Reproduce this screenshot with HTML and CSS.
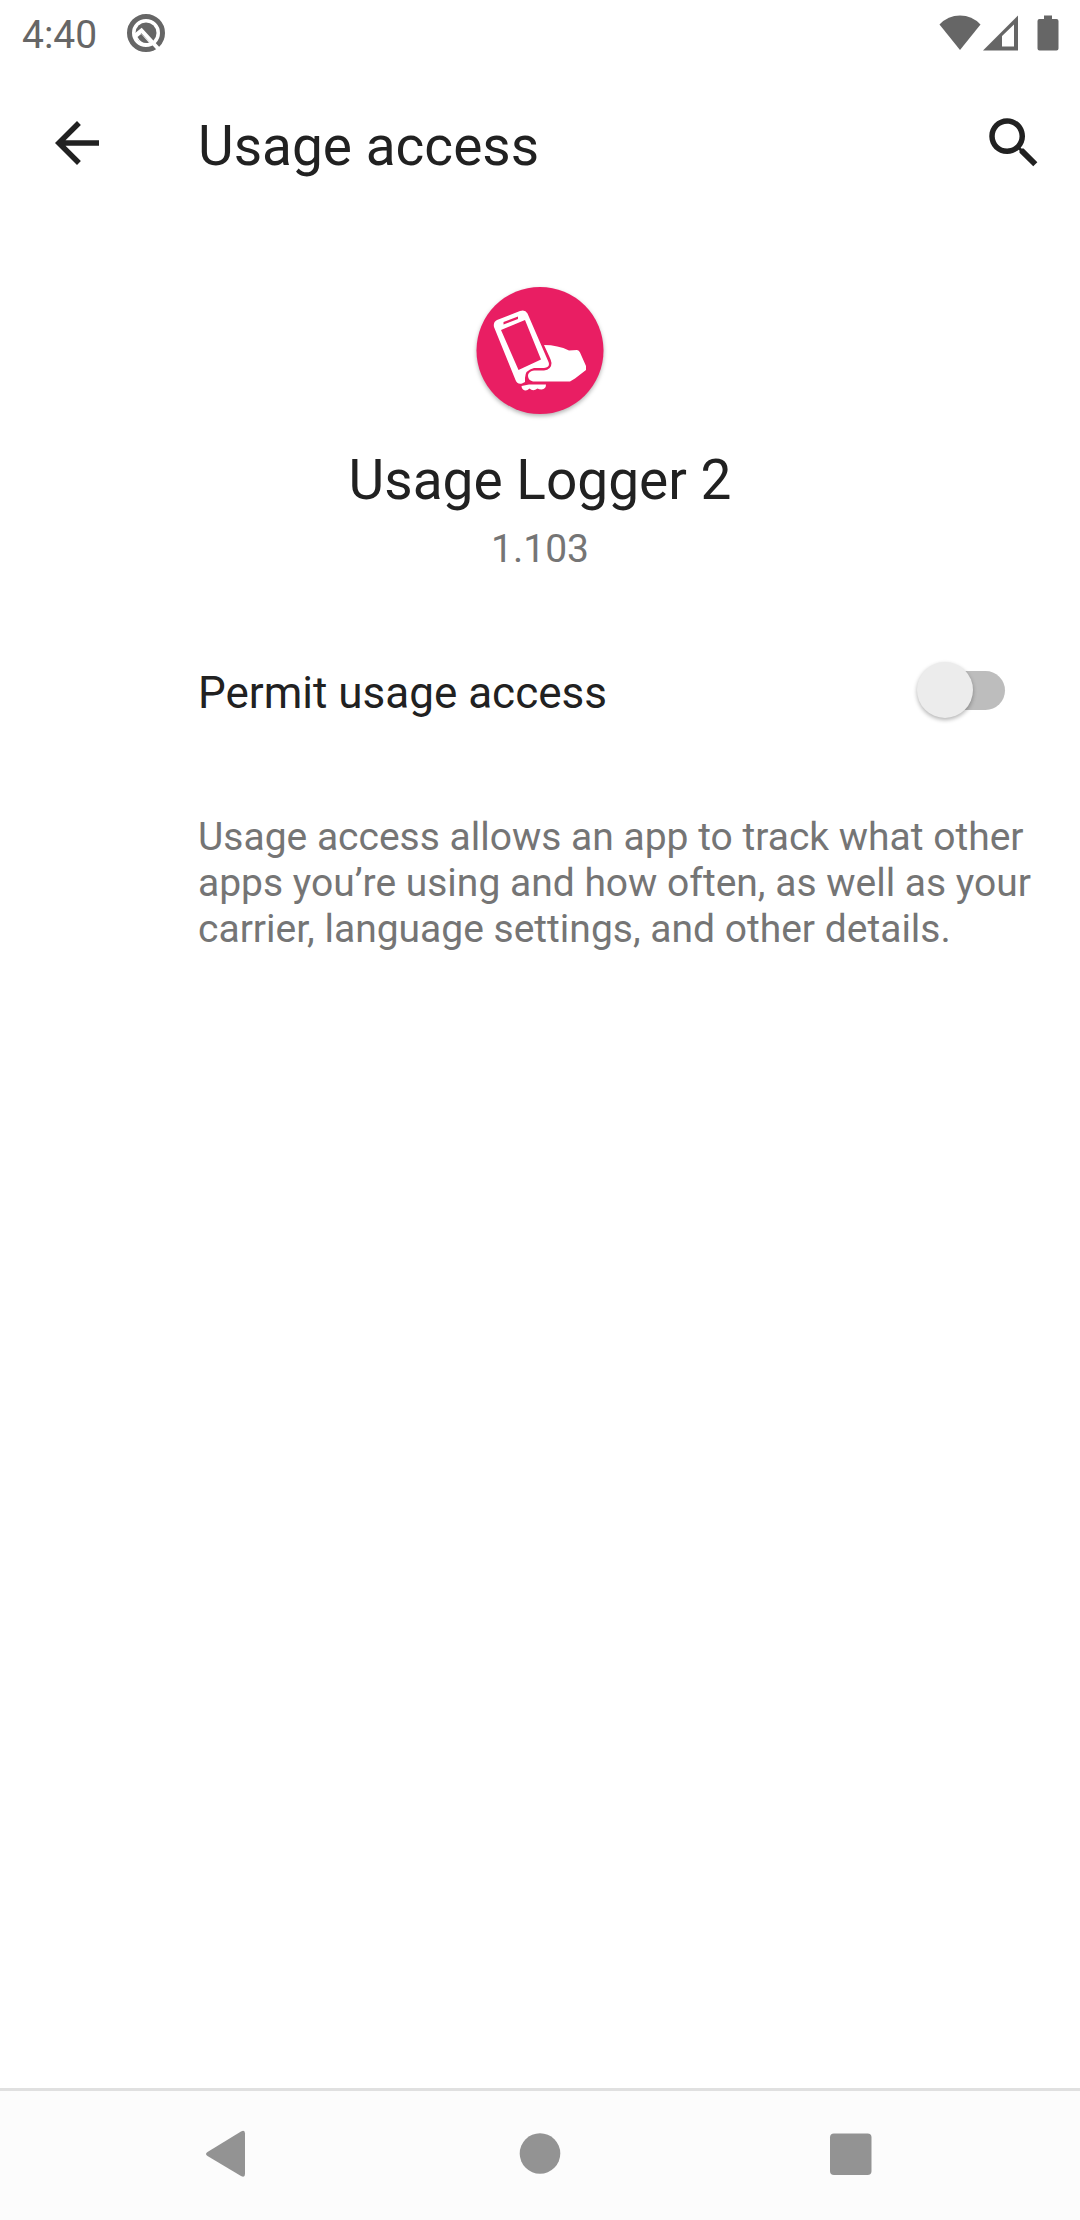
FILE: index.html
```html
<!DOCTYPE html>
<html lang="en">
<head>
<meta charset="utf-8">
<meta name="viewport" content="width=device-width, initial-scale=1">
<title>Usage access</title>
<link rel="stylesheet" href="styles.css">
</head>
<body>
<div class="status-bar">
  <span class="clock">4:40</span>
  <svg class="notice-icon" viewBox="0 0 40 40" aria-hidden="true">
    <circle cx="20" cy="20" r="16.500" fill="none" stroke="#666" stroke-width="5"/>
    <circle cx="20" cy="20" r="10.500" fill="#666"/>
    <path d="M8.500 23L15.500 17.500L32.500 36" fill="none" stroke="#fff" stroke-width="4"/>
    <path d="M9 24L14.500 20L26 31.500L17 32Z" fill="#fff"/>
    <path d="M11.500 24L15.200 21L23 29.800Q15.500 31.500 11.500 24Z" fill="#666"/>
  </svg>
  <div class="status-icons">
    <svg class="wifi" viewBox="0 0 42 36" aria-hidden="true"><path d="M0.500 9.500Q9 0.500 21 0.500T41.500 9.500L21 35Z" fill="#666"/></svg>
    <svg class="signal" viewBox="0 0 36 36" aria-hidden="true"><path fill-rule="evenodd" d="M0 35.500L35 0.500V35.500ZM19 21V31.500H31V9.500Z" fill="#666"/></svg>
    <svg class="battery" viewBox="0 0 22 36" aria-hidden="true"><path d="M7 0.500H15V4H19.500Q21.500 4 21.500 6V33.500Q21.500 35.500 19.500 35.500H2.500Q0.500 35.500 0.500 33.500V6Q0.500 4 2.500 4H7Z" fill="#666"/></svg>
  </div>
</div>

<header class="app-bar">
  <button class="icon-button" type="button" aria-label="Navigate up">
    <svg viewBox="0 0 24 24" aria-hidden="true"><path d="M20 11H7.830l5.590-5.590L12 4l-8 8 8 8 1.410-1.410L7.830 13H20v-2z"/></svg>
  </button>
  <h1 class="title">Usage access</h1>
  <button class="icon-button" type="button" aria-label="Search">
    <svg viewBox="0 0 24 24" aria-hidden="true"><path d="M15.500 14h-.79l-.28-.27C15.410 12.590 16 11.110 16 9.500 16 5.910 13.090 3 9.500 3S3 5.910 3 9.500 5.910 16 9.500 16c1.610 0 3.090-.59 4.230-1.570l.27.28v.79l5 4.990L20.490 19l-4.990-5zm-6 0C7.010 14 5 11.990 5 9.500S7.010 5 9.500 5 14 7.010 14 9.500 11.990 14 9.500 14z"/></svg>
  </button>
</header>

<main>
  <section class="app-header">
    <svg class="app-icon" viewBox="0 0 160 160" aria-hidden="true">
      <circle cx="80" cy="80.500" r="63.500" fill="#e91e63"/>
      <g fill="#fff">
        <path fill-rule="evenodd" d="M37 50L60 41Q65 39 67.500 43.500L88.500 92Q90.500 97 84 98H74Q65 100 65 108V112L62 113.500Q57 114.500 55.500 110L34 57Q33 52 37 50ZM41 60L58.500 100L81 89.500L65 50ZM43.500 52V54.500L58 49V46.500Z"/>
        <path d="M84 75Q98 75 109 80.500L117 80Q119 80 120 82.500L126 96V100L115 108.500L110 111.500H73Q67.500 110 68 105Q69 101 74 100.500H84Q91.500 99.500 91.500 93Q91 90 89.500 87Z"/>
        <path d="M61.500 116L69 114.500H86Q86 119 81.500 119.500Q79 119.500 77.500 118.500Q73 122 69.500 118.500Q66 122 63 119.500Q61.500 118 61.500 116Z"/>
      </g>
    </svg>
    <h2 class="title">Usage Logger 2</h2>
    <p class="version">1.103</p>
  </section>

  <div class="preference">
    <label for="permit">Permit usage access</label>
    <input class="switch" id="permit" type="checkbox" role="switch">
  </div>

  <p class="description">Usage access allows an app to track what other apps you’re using and how often, as well as your carrier, language settings, and other details.</p>
</main>

<nav class="nav-bar">
  <button type="button" aria-label="Back"><svg viewBox="0 0 66 66" aria-hidden="true"><path d="M11.500 31L45 10.500Q49 8.500 49 12.500V53Q49 57 45 55L11.500 35Q8.500 33 11.500 31Z"/></svg></button>
  <button type="button" aria-label="Home"><svg viewBox="0 0 66 66" aria-hidden="true"><circle cx="33" cy="32.500" r="20.300"/></svg></button>
  <button type="button" aria-label="Overview"><svg viewBox="0 0 66 66" aria-hidden="true"><rect x="12" y="12.500" width="41.500" height="41.500" rx="4"/></svg></button>
</nav>
</body>
</html>
```
FILE: styles.css
```css
* {
  box-sizing: border-box;
}

body {
  margin: 0;
  min-height: 100vh;
  display: flex;
  flex-direction: column;
  background: #fff;
  color: #212121;
  font-family: Roboto, "Liberation Sans", sans-serif;
}

h1, h2, p {
  margin: 0;
  font-weight: 400;
}

button {
  display: flex;
  align-items: center;
  justify-content: center;
  padding: 0;
  border: 0;
  background: none;
}

.status-bar {
  display: flex;
  align-items: center;
  height: 66px;
  padding: 0 21px 0 22px;
  color: #666;
}

.clock {
  padding-top: 4px;
  font-size: 39px;
  line-height: 46px;
}

.notice-icon {
  width: 40px;
  height: 40px;
  margin-left: 29px;
}

.status-icons {
  display: flex;
  margin-left: auto;
}

.wifi {
  width: 42px;
  height: 36px;
}

.signal {
  width: 36px;
  height: 36px;
  margin-left: 2px;
}

.battery {
  width: 22px;
  height: 36px;
  margin-left: 18px;
}

.app-bar {
  display: flex;
  align-items: center;
  height: 154px;
  padding: 0 33px 0 44px;
}

.icon-button {
  width: 66px;
  height: 66px;
}

.icon-button svg {
  width: 66px;
  height: 66px;
  fill: #212121;
}

.title {
  font-size: 55px;
  line-height: 64px;
}

.app-bar .title {
  flex: 1;
  padding: 6px 0 0 88px;
}

main {
  flex: 1;
}

.app-header {
  display: flex;
  flex-direction: column;
  align-items: center;
  padding-top: 50px;
}

.app-icon {
  width: 160px;
  height: 160px;
  margin-bottom: 18px;
  filter: drop-shadow(0 2px 2px rgba(0, 0, 0, 0.3));
}

.version {
  margin-top: 14px;
  font-size: 39px;
  line-height: 46px;
  color: #757575;
}

.preference {
  display: flex;
  align-items: center;
  justify-content: space-between;
  height: 154px;
  margin-top: 41px;
  padding: 0 75px 0 198px;
  font-size: 44px;
  line-height: 52px;
}

.preference label {
  padding-top: 6px;
}

.switch {
  appearance: none;
  display: flex;
  align-items: center;
  width: 88px;
  height: 56px;
  margin: 0;
}

.switch::before {
  content: "";
  flex: none;
  width: 56px;
  height: 56px;
  border-radius: 50%;
  background: #ececec;
  box-shadow: 0 2px 4px rgba(0, 0, 0, 0.3);
  z-index: 1;
}

.switch::after {
  content: "";
  flex: none;
  width: 78px;
  height: 39px;
  margin-left: -46px;
  border-radius: 20px;
  background: #bdbdbd;
}

.switch:checked {
  flex-direction: row-reverse;
}

.description {
  padding: 47px 33px 0 198px;
  font-size: 39px;
  line-height: 46px;
  color: #757575;
}

.nav-bar {
  display: grid;
  grid-template-columns: repeat(3, 1fr);
  height: 132px;
  padding: 0 73px 3px;
  border-top: 3px solid #e0e0e0;
  background: #fcfcfc;
}

.nav-bar svg {
  width: 66px;
  height: 66px;
  fill: #939393;
}
```
